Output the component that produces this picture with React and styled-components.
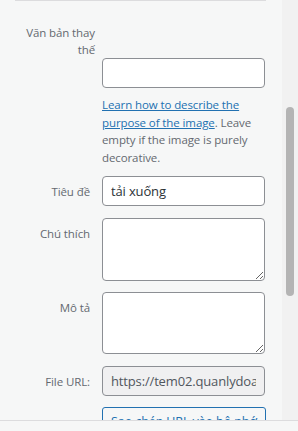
import React from "react";
import styled, { createGlobalStyle } from "styled-components";

const Global = createGlobalStyle`
  html, body { margin: 0; padding: 0; }
  body {
    background: #f6f7f7;
    font-family: "Open Sans", "Noto Sans", sans-serif;
    color: #2c3338;
  }
`;

const Frame = styled.div`
  width: 298px;
  height: 431px;
  display: flex;
  flex-direction: column;
  background: #f6f7f7;
  overflow: hidden;
`;

const ScrollArea = styled.div`
  height: 420px;
  flex: none;
  display: flex;
  flex-direction: row;
  overflow: hidden;
`;

const Content = styled.div`
  width: 282px;
  display: flex;
  flex-direction: column;
`;

const Rule = styled.div`
  margin: 0 16px 0 15px;
  border-top: 1px solid #dcdcde;
`;

const Track = styled.div`
  width: 16px;
  background: #f1f1f1;
  display: flex;
  justify-content: center;
  align-items: flex-start;
  padding-top: 107px;
  box-sizing: border-box;
`;

const Thumb = styled.div`
  width: 8px;
  height: 189px;
  border-radius: 4px;
  background: #b4b4b4;
`;

const Footer = styled.div`
  flex: 1;
  border-top: 1px solid #dcdcde;
  background: #f6f7f7;
`;

const Row = styled.div`
  display: grid;
  grid-template-columns: 90px 163px;
  column-gap: 12px;
  align-items: start;
  margin-top: ${(p) => p.$gap ?? 12}px;
`;

const Label = styled.label`
  font-size: 11.5px;
  letter-spacing: -0.1px;
  line-height: 17px;
  color: #646970;
  text-align: right;
  padding-top: 7px;
`;

const StackLabel = styled.label`
  display: block;
  width: 80px;
  margin: 23px 0 0 15px;
  font-size: 11.5px;
  letter-spacing: -0.1px;
  line-height: 17px;
  color: #646970;
  text-align: right;
`;

const Field = styled.div`
  grid-column: 2;
  display: flex;
  flex-direction: column;
`;

const TextInput = styled.input`
  box-sizing: border-box;
  width: 163px;
  height: 30px;
  margin: 0;
  padding: 0 8px;
  border: 1px solid #8c8f94;
  border-radius: 4px;
  background: ${(p) => (p.readOnly ? "#f0f0f1" : "#fff")};
  color: ${(p) => (p.readOnly ? "#50575e" : "#2c3338")};
  font-family: inherit;
  font-size: 13px;
  letter-spacing: -0.15px;
  outline: none;
`;

const TextArea = styled.textarea`
  box-sizing: border-box;
  display: block;
  width: 163px;
  height: ${(p) => p.$h}px;
  margin: 0;
  padding: 6px 8px;
  border: 1px solid #8c8f94;
  border-radius: 4px;
  background: #fff;
  font-family: inherit;
  font-size: 13px;
  outline: none;
`;

const Help = styled.p`
  margin: 8px 0 0;
  font-size: 11.5px;
  letter-spacing: -0.1px;
  line-height: 17.7px;
  color: #646970;
`;

const HelpLink = styled.a`
  color: #2271b1;
  text-decoration: underline;
`;

const CopyButton = styled.button`
  box-sizing: border-box;
  width: 164px;
  min-height: 30px;
  margin: 0;
  padding: 5px 4px 2px;
  border: 1px solid #2271b1;
  border-radius: 3px;
  background: #f6f7f7;
  color: #2271b1;
  font-family: inherit;
  font-size: 12.5px;
  letter-spacing: -0.1px;
  line-height: 18px;
  text-align: center;
`;

export default function App() {
  return (
    <>
      <Global />
      <Frame>
        <ScrollArea>
          <Content>
            <Rule />
            <StackLabel htmlFor="alt">Văn bản thay thế</StackLabel>
            <Row $gap={0}>
              <Field>
                <TextInput id="alt" type="text" defaultValue="" />
                <Help>
                  <HelpLink href="#">
                    Learn how to describe the purpose of the image
                  </HelpLink>
                  . Leave empty if the image is purely decorative.
                </Help>
              </Field>
            </Row>
            <Row $gap={9}>
              <Label htmlFor="title">Tiêu đề</Label>
              <TextInput id="title" type="text" defaultValue="tải xuống" />
            </Row>
            <Row $gap={12}>
              <Label htmlFor="caption">Chú thích</Label>
              <TextArea id="caption" $h={63} />
            </Row>
            <Row $gap={11}>
              <Label htmlFor="desc">Mô tả</Label>
              <TextArea id="desc" $h={62} />
            </Row>
            <Row $gap={12}>
              <Label htmlFor="url">File URL:</Label>
              <TextInput
                id="url"
                type="text"
                readOnly
                defaultValue="https://tem02.quanlydoan.com/wp-content/uploads/tai-xuong.jpg"
              />
            </Row>
            <Row $gap={11}>
              <Field>
                <CopyButton type="button">Sao chép URL vào bộ nhớ tạm</CopyButton>
              </Field>
            </Row>
          </Content>
          <Track>
            <Thumb />
          </Track>
        </ScrollArea>
        <Footer />
      </Frame>
    </>
  );
}
